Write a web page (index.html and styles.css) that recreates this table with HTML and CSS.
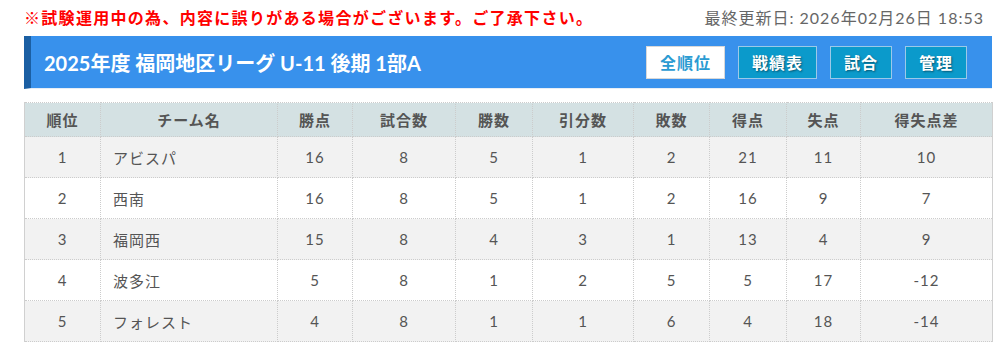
FILE: index.html
```html
<!DOCTYPE html>
<html lang="ja">
<head>
<meta charset="utf-8">
<link rel="stylesheet" href="styles.css">
</head>
<body>
<div class="page">
  <div class="topline">
    <p class="notice">※試験運用中の為、内容に誤りがある場合がございます。ご了承下さい。</p>
    <p class="updated">最終更新日: 2026年02月26日 18:53</p>
  </div>
  <div class="league-bar">
    <h1 class="league-title">2025年度 福岡地区リーグ U-11 後期 1部A</h1>
    <nav class="league-nav">
      <a class="nav-btn active w79">全順位</a>
      <a class="nav-btn w79">戦績表</a>
      <a class="nav-btn w62">試合</a>
      <a class="nav-btn w62">管理</a>
    </nav>
  </div>
  <table class="standings">
    <colgroup>
      <col style="width:76px"><col style="width:177px"><col style="width:75px"><col style="width:103px"><col style="width:77px"><col style="width:101px"><col style="width:76px"><col style="width:77px"><col style="width:74px"><col style="width:132px">
    </colgroup>
    <thead>
      <tr><th>順位</th><th>チーム名</th><th>勝点</th><th>試合数</th><th>勝数</th><th>引分数</th><th>敗数</th><th>得点</th><th>失点</th><th>得失点差</th></tr>
    </thead>
    <tbody>
      <tr><td>1</td><td class="team">アビスパ</td><td>16</td><td>8</td><td>5</td><td>1</td><td>2</td><td>21</td><td>11</td><td>10</td></tr>
      <tr><td>2</td><td class="team">西南</td><td>16</td><td>8</td><td>5</td><td>1</td><td>2</td><td>16</td><td>9</td><td>7</td></tr>
      <tr><td>3</td><td class="team">福岡西</td><td>15</td><td>8</td><td>4</td><td>3</td><td>1</td><td>13</td><td>4</td><td>9</td></tr>
      <tr><td>4</td><td class="team">波多江</td><td>5</td><td>8</td><td>1</td><td>2</td><td>5</td><td>5</td><td>17</td><td>-12</td></tr>
      <tr><td>5</td><td class="team">フォレスト</td><td>4</td><td>8</td><td>1</td><td>1</td><td>6</td><td>4</td><td>18</td><td>-14</td></tr>
    </tbody>
  </table>
</div>
</body>
</html>
```

FILE: styles.css
```css
html, body {
  margin: 0;
  padding: 0;
  background: #fff;
}
body {
  font-family: Lato, "Noto Sans CJK JP", sans-serif;
  color: #555;
}
.page {
  width: 968px;
  margin-left: 24px;
}
.topline {
  display: flex;
  justify-content: space-between;
  align-items: center;
  height: 36px;
  padding-right: 8px;
}
.notice {
  margin: 0;
  color: #f00;
  font-weight: bold;
  font-size: 16px;
  letter-spacing: 1.3px;
  line-height: 36px;
}
.updated {
  margin: 0;
  color: #666;
  font-size: 16px;
  letter-spacing: 1px;
  line-height: 36px;
}
.league-bar {
  display: flex;
  align-items: center;
  justify-content: space-between;
  height: 52px;
  background: #3891ec;
  border-left: 7px solid #1b5fa3;
  border-bottom: 1px solid #e6eef6;
  padding: 0 25px 0 13px;
}
.league-title {
  margin: 0;
  color: #fff;
  font-size: 20px;
  font-weight: bold;
}
.league-nav {
  display: flex;
  gap: 13px;
}
.nav-btn {
  display: flex;
  align-items: center;
  justify-content: center;
  height: 33px;
  box-sizing: border-box;
  background: #0b9acb;
  border: 1px solid #9cc9e8;
  color: #fff;
  font-size: 16px;
  font-weight: bold;
  letter-spacing: 1px;
  text-shadow: 1px 1px 2px rgba(0,0,0,0.45);
  text-decoration: none;
}
.nav-btn.active {
  background: #fff;
  border-color: #d8d8d8;
  color: #2b9bd2;
  text-shadow: none;
}
.w79 { width: 79px; }
.w62 { width: 62px; }
.standings {
  margin-top: 13px;
  width: 968px;
  border-collapse: collapse;
  table-layout: fixed;
  border-left: 1px solid #d0d0d0;
  border-right: 1px solid #d0d0d0;
  font-size: 15px;
}
.standings th {
  height: 33px;
  background: #d4e1e3;
  font-weight: bold;
  color: #555;
  letter-spacing: 1px;
  border: 1px dotted #ccc;
  padding: 0;
}
.standings td {
  height: 40px;
  text-align: center;
  border: 1px dotted #ccc;
  padding: 0;
  letter-spacing: 1px;
}
.standings td.team {
  text-align: left;
  padding-left: 12px;
}
.standings tbody tr:nth-child(odd) td {
  background: #f2f2f2;
}
.standings tbody tr:nth-child(even) td {
  background: #fff;
}
```
